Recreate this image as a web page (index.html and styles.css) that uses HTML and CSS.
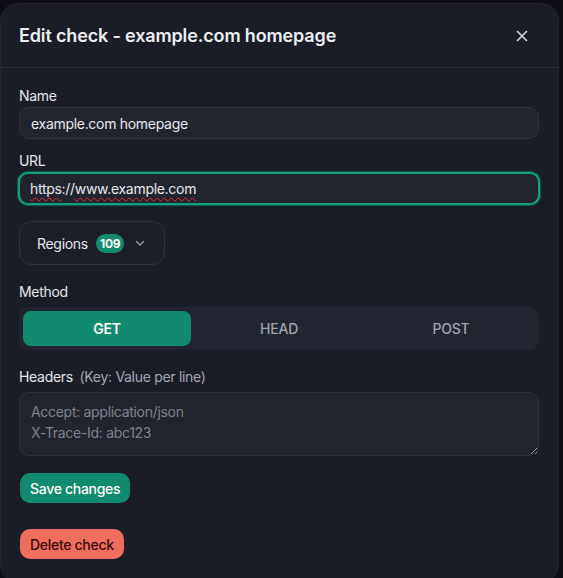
FILE: index.html
```html
<!DOCTYPE html>
<html lang="en">
<head>
<meta charset="utf-8">
<title>Edit check</title>
<link rel="stylesheet" href="styles.css">
</head>
<body>
<div class="modal">
  <div class="modal-header">
    <h2 class="modal-title">Edit check - example.com homepage</h2>
    <button class="close-btn" aria-label="Close">
      <svg width="12" height="12" viewBox="0 0 12 12"><path d="M1.5 1.5 L10.5 10.5 M10.5 1.5 L1.5 10.5" stroke="#d6d8de" stroke-width="1.6" stroke-linecap="round" fill="none"/></svg>
    </button>
  </div>
  <div class="modal-body">
    <label class="label">Name</label>
    <div class="input">example.com homepage</div>

    <label class="label label-url">URL</label>
    <div class="input input-focus"><span class="spell">https</span>://<span class="spell">www.example.com</span></div>

    <button class="regions-btn">
      <span>Regions</span>
      <span class="badge">109</span>
      <svg class="chev" width="12" height="12" viewBox="0 0 12 12"><path d="M2.5 4.5 L6 8 L9.5 4.5" stroke="#9a9ea8" stroke-width="1.4" fill="none" stroke-linecap="round" stroke-linejoin="round"/></svg>
    </button>

    <label class="label label-gap">Method</label>
    <div class="segmented">
      <button class="seg active">GET</button>
      <button class="seg">HEAD</button>
      <button class="seg">POST</button>
    </div>

    <label class="label label-gap">Headers <span class="hint">(Key: Value per line)</span></label>
    <textarea class="textarea" placeholder="Accept: application/json&#10;X-Trace-Id: abc123"></textarea>

    <div class="actions">
      <button class="btn btn-save">Save changes</button>
    </div>
    <div class="actions actions-delete">
      <button class="btn btn-delete">Delete check</button>
    </div>
  </div>
</div>
</body>
</html>
```

FILE: styles.css
```css
* { box-sizing: border-box; }
html, body { margin: 0; padding: 0; }
body {
  background: #0d0f14;
  font-family: Inter, "Noto Sans", sans-serif;
  color: #e6e7eb;
  color-scheme: dark;
  padding: 3px 4px 0 0;
  height: 578px;
  overflow: hidden;
  letter-spacing: -0.3px;
}
.modal {
  width: 559px;
  height: 580px;
  background: #1b1d26;
  border-radius: 18px;
  border: 1px solid #22252e;
}
.modal-header {
  height: 64px;
  display: flex;
  align-items: center;
  justify-content: space-between;
  padding: 0 30px 0 18px;
  border-bottom: 1px solid #2a2d36;
}
.modal-title {
  margin: 0;
  font-size: 18px;
  font-weight: 600;
  color: #eceef2;
  letter-spacing: -0.15px;
}
.close-btn {
  background: none;
  border: none;
  padding: 0;
  width: 12px;
  height: 12px;
  display: flex;
}
.modal-body {
  padding: 18px 19px 0 18px;
  display: flex;
  flex-direction: column;
  align-items: flex-start;
}
.label {
  display: block;
  font-size: 14px;
  line-height: 20px;
  color: #e4e6ea;
  margin-bottom: 1px;
}
.label-url { margin-top: 12px; }
.label-gap { margin-top: 17px; margin-bottom: 5px; }
.hint { color: #a3a7b0; margin-left: 3px; }
.input {
  width: 520px;
  height: 32px;
  border: 1px solid #30333c;
  background: #22242d;
  border-radius: 10px;
  padding: 0 11px;
  display: flex;
  align-items: center;
  font-size: 14px;
  color: #e8e9ed;
}
.input-focus {
  width: 522px;
  margin-left: -1px;
  height: 33px;
  border: 2px solid #17a07e;
  box-shadow: 0 0 0 1px #0f5e4b;
  padding: 0 10px;
}
.spell {
  text-decoration: underline wavy #e0312f;
  text-decoration-thickness: 1px;
  text-underline-offset: 3px;
}
.regions-btn {
  margin-top: 16px;
  height: 44px;
  padding: 0 18px 0 17px;
  border-radius: 13px;
  border: 1px solid #30333c;
  background: #1d1f28;
  color: #e6e7eb;
  font-family: inherit;
  font-size: 14px;
  letter-spacing: -0.3px;
  display: flex;
  align-items: center;
  gap: 8px;
}
.badge {
  background: #118a6d;
  color: #ffffff;
  font-size: 12px;
  font-weight: 700;
  border-radius: 10px;
  padding: 2px 4px;
  line-height: 15px;
  letter-spacing: -0.2px;
}
.chev { margin-left: 2px; }
.segmented {
  width: 520px;
  height: 43px;
  background: #22252f;
  border-radius: 10px;
  padding: 4px;
  display: grid;
  grid-template-columns: 1fr 1fr 1fr;
  gap: 4px;
}
.seg {
  border: none;
  border-radius: 8px;
  background: transparent;
  color: #a0a4ad;
  font-family: inherit;
  font-size: 14px;
  font-weight: 500;
  letter-spacing: -0.2px;
}
.seg.active {
  background: #118a6d;
  color: #ffffff;
  font-weight: 600;
}
.textarea {
  width: 520px;
  height: 64px;
  border: 1px solid #30333c;
  background: #22242d;
  border-radius: 10px;
  padding: 8px 11px;
  font-family: inherit;
  font-size: 14px;
  line-height: 21px;
  letter-spacing: -0.3px;
  color: #e8e9ed;
  resize: vertical;
  outline: none;
}
.textarea::placeholder { color: #7e828c; }
.actions { margin-top: 17px; }
.actions-delete { margin-top: 26px; }
.btn {
  height: 30px;
  padding: 0 10px;
  border: none;
  border-radius: 10px;
  font-family: inherit;
  font-size: 14px;
  font-weight: 500;
  letter-spacing: -0.3px;
  margin-left: 1px;
}
.btn-save { background: #118a6d; color: #ffffff; }
.btn-delete { background: #f06e5f; color: #3a0b0b; }
```
